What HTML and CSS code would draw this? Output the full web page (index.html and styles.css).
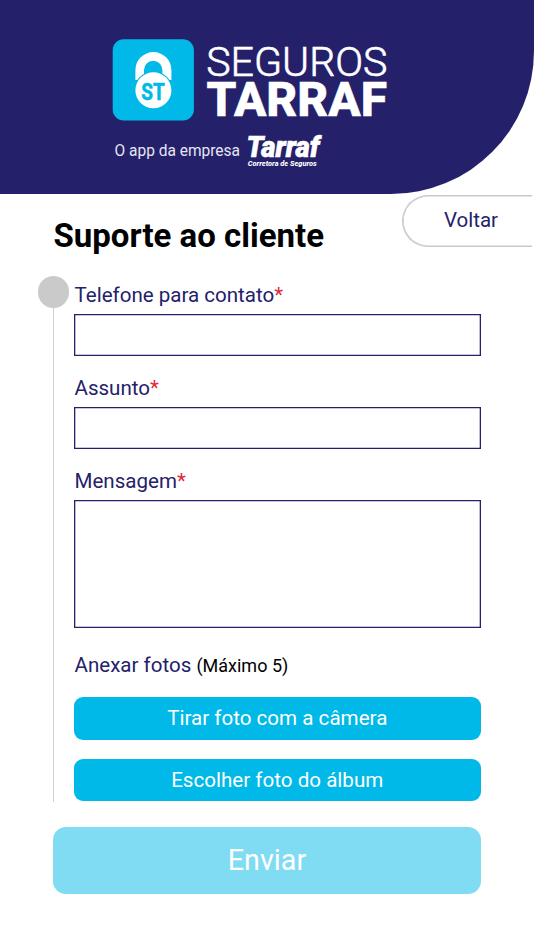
FILE: index.html
```html
<!DOCTYPE html>
<html lang="pt-BR">
<head>
<meta charset="utf-8">
<title>Suporte ao cliente</title>
<link rel="stylesheet" href="styles.css">
</head>
<body>
<header class="header">
  <svg class="brand" width="276" height="134" viewBox="112 38 276 134" role="img" aria-label="Seguros Tarraf">
    <rect class="cyan" x="112.700" y="39.200" width="81.200" height="81.200" rx="11"/>
    <path class="white" d="M135.400 80V70a18 18 0 0 1 36 0v10h-9V70a9.200 9.200 0 0 0-18.400 0v10z"/>
    <circle class="cyan" cx="153.400" cy="90.300" r="19"/>
    <circle class="white" cx="153.400" cy="90.300" r="18"/>
    <text class="mono" x="141.200" y="99.600" textLength="23.500" lengthAdjust="spacingAndGlyphs">ST</text>
    <text class="name-light" x="206.200" y="76" textLength="181.300" lengthAdjust="spacingAndGlyphs">SEGUROS</text>
    <text class="name-bold" x="206.600" y="115.700" textLength="180.400" lengthAdjust="spacingAndGlyphs">TARRAF</text>
    <text class="tagline" x="114.500" y="155.500" textLength="125.500" lengthAdjust="spacingAndGlyphs">O app da empresa</text>
    <text class="company" x="246.500" y="157.400" textLength="73" lengthAdjust="spacingAndGlyphs">Tarraf</text>
    <text class="company-sub" x="247.800" y="165.500" textLength="69" lengthAdjust="spacingAndGlyphs">Corretora de Seguros</text>
  </svg>
</header>
<main class="page">
  <div class="title-row">
    <h1 class="title">Suporte ao cliente</h1>
    <button class="back">Voltar</button>
  </div>
  <form class="form">
    <div class="rail"><span class="dot"></span><span class="line"></span></div>
    <div class="fields">
      <label class="label" for="phone">Telefone para contato<span class="req">*</span></label>
      <input class="input" id="phone" type="text">
      <label class="label" for="subject">Assunto<span class="req">*</span></label>
      <input class="input" id="subject" type="text">
      <label class="label" for="message">Mensagem<span class="req">*</span></label>
      <textarea class="input area" id="message"></textarea>
      <p class="label attach">Anexar fotos <span class="hint">(Máximo 5)</span></p>
      <button class="button" type="button">Tirar foto com a câmera</button>
      <button class="button" type="button">Escolher foto do álbum</button>
    </div>
  </form>
  <button class="submit">Enviar</button>
</main>
</body>
</html>
```
FILE: styles.css
```css
* { box-sizing: border-box; }
body {
  margin: 0;
  height: 950px;
  overflow: hidden;
  background: #fff;
  color: #000;
  font-family: Roboto, "Liberation Sans", sans-serif;
}
button, input, textarea { font: inherit; margin: 0; }
.header {
  height: 193.500px;
  padding: 38px 0 0 112px;
  background: #24216a;
  border-bottom-right-radius: 143px;
}
.brand { display: block; }
.cyan { fill: #00b9e8; }
.white { fill: #fff; }
.brand text { fill: #fff; }
.brand .mono { fill: #00b9e8; stroke: #00b9e8; stroke-width: .6px; font-size: 24px; font-weight: 700; }
.name-light { font-size: 40px; font-weight: 300; stroke: #fff; stroke-width: .6px; }
.name-bold { font-size: 47.500px; font-weight: 800; stroke: #fff; stroke-width: .6px; }
.brand .tagline { font-size: 16px; fill: #e6e6f2; }
.company { font-size: 29.500px; font-style: italic; font-weight: 900; stroke: #fff; stroke-width: .6px; }
.company-sub { font-size: 7.800px; font-style: italic; font-weight: 800; }
.title-row {
  display: flex;
  justify-content: space-between;
  height: 82.500px;
  padding: 1.500px 2px 0 53.500px;
}
.title { margin: 20.500px 0 0; font-size: 33px; line-height: 40px; font-weight: 700; }
.back {
  width: 130px;
  height: 51.500px;
  padding: 0 0 2px 7px;
  border: 1px solid #c9c9c9;
  border-right: 0;
  border-radius: 26px 0 0 26px;
  box-shadow: inset .500px .500px #c9c9c9, inset .500px -.500px #c9c9c9;
  background: #fff;
  color: #24216a;
  font-size: 20.500px;
}
.form { display: flex; padding-left: 37.500px; height: 525.500px; }
.rail { display: flex; flex-direction: column; align-items: center; width: 31.500px; margin-right: 4.500px; }
.dot { width: 31.500px; height: 31.500px; border-radius: 50%; background: #cacaca; }
.line { flex: 1; width: 1.300px; background: #cfcfcf; }
.fields { display: flex; flex-direction: column; width: 407.500px; padding-top: 7px; }
.label { flex: none; margin: 0; padding-left: 1px; font-size: 20.550px; line-height: 24px; color: #24216a; }
.req { color: #e0283c; }
.input {
  display: block;
  flex: none;
  width: 100%;
  height: 42px;
  margin: 7px 0 19.800px;
  border: 1px solid #24216a;
  border-radius: 0;
  box-shadow: inset 0 0 0 .300px #24216a;
  background: #fff;
  outline: 0;
}
.area { height: 128.500px; margin-bottom: 25px; resize: none; }
.attach { margin-bottom: 19px; }
.hint { font-size: 18px; color: #000; }
.button {
  height: 42.500px;
  margin-bottom: 19.400px;
  flex: none;
  border: 0;
  border-radius: 9px;
  background: #00b9e8;
  color: #fff;
  font-size: 20.600px;
}
.submit {
  display: block;
  width: 428px;
  height: 67px;
  margin: 25.500px 0 0 53px;
  padding: 0 0 2px;
  border: 0;
  border-radius: 13px;
  background: #80dcf3;
  color: #fff;
  font-size: 28.700px;
}
```
